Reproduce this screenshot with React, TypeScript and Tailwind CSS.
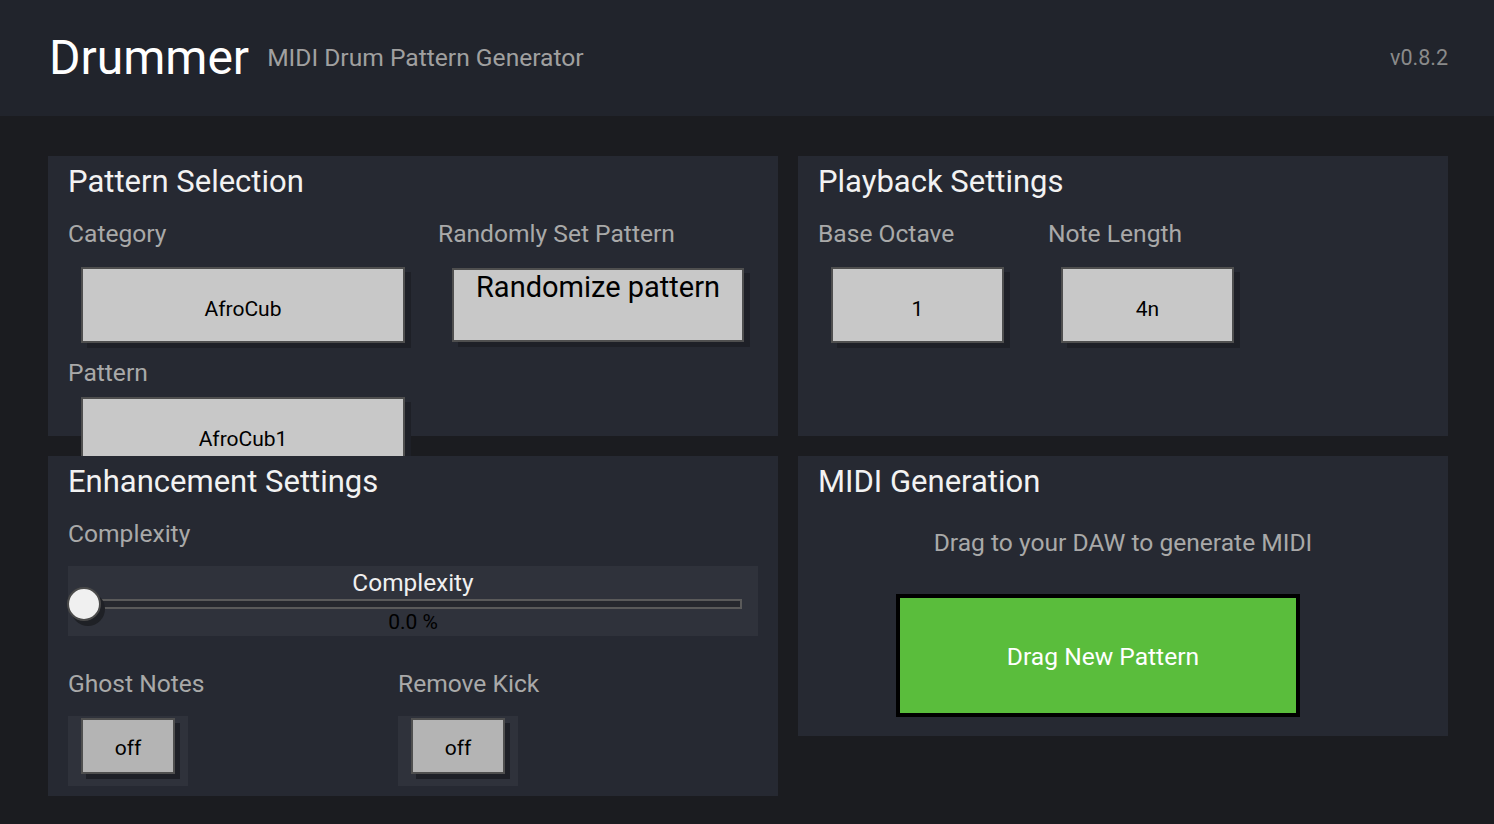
import React from 'react';

const font = { fontFamily: 'Roboto, "Noto Sans", sans-serif' };

function Panel({ title, className = '', children }: { title: string; className?: string; children?: React.ReactNode }) {
  return (
    <section className={`bg-[#262932] px-[20px] pt-[7px] ${className}`}>
      <h2 className="text-[31px] leading-[38px] text-[#f2f2f2] whitespace-nowrap">{title}</h2>
      {children}
    </section>
  );
}

function Label({ children }: { children: React.ReactNode }) {
  return <div className="text-[24.6px] leading-[28px] text-[#a9a9a9] whitespace-nowrap">{children}</div>;
}

function SelectButton({ value, className = '' }: { value: string; className?: string }) {
  return (
    <div
      className={`flex justify-center items-center pt-[8px] h-[76px] border-2 border-[#4f4f4f] bg-[#c8c8c8] text-[21px] leading-[24px] text-black shadow-[6px_5px_0_#1e2027] ${className}`}
    >
      {value}
    </div>
  );
}

function Toggle() {
  return (
    <div className="w-[120px] h-[70px] bg-[#2f323b] pl-[13px] pt-[2px]">
      <div className="flex justify-center items-center pt-[4px] w-[94px] h-[56px] border-2 border-[#4f4f4f] bg-[#b4b4b4] text-[21px] leading-[24px] text-black shadow-[5px_5px_0_#1e2027]">
        off
      </div>
    </div>
  );
}

export default function App() {
  return (
    <div className="min-h-[824px] bg-[#1b1c20]" style={font}>
      <header className="h-[116px] bg-[#21242c] flex items-center justify-between pl-[49px] pr-[46px]">
        <div className="flex items-center gap-[18px]">
          <h1 className="text-[48px] leading-[56px] text-white">Drummer</h1>
          <span className="text-[24.6px] leading-[28px] text-[#a0a0a0]">MIDI Drum Pattern Generator</span>
        </div>
        <span className="text-[21.5px] leading-[24px] text-[#8a8a8a]">v0.8.2</span>
      </header>

      <main className="flex gap-[20px] pt-[40px] pl-[48px] pr-[46px] pb-[28px]">
        <div className="flex flex-col gap-[20px] w-[730px] shrink-0">
          <Panel title="Pattern Selection" className="h-[280px]">
            <div className="grid grid-cols-[370px_1fr] mt-[19px]">
              <div>
                <Label>Category</Label>
                <SelectButton value="AfroCub" className="mt-[19px] ml-[13px] w-[324px]" />
                <div className="mt-[16px]">
                  <Label>Pattern</Label>
                </div>
                <SelectButton value="AfroCub1" className="mt-[10px] ml-[13px] w-[324px]" />
              </div>
              <div>
                <Label>Randomly Set Pattern</Label>
                <div className="mt-[20px] ml-[14px] w-[292px] h-[74px] border-2 border-[#4f4f4f] bg-[#c8c8c8] text-center pt-[1px] text-[29px] leading-[32px] text-black shadow-[6px_5px_0_#1e2027]">
                  Randomize pattern
                </div>
              </div>
            </div>
          </Panel>

          <Panel title="Enhancement Settings" className="relative h-[340px]">
            <div className="mt-[19px]">
              <Label>Complexity</Label>
            </div>
            <div className="mt-[18px] h-[70px] bg-[#2f323b] flex flex-col items-center pt-[4px]">
              <div className="text-[24.4px] leading-[26px] text-[#f0f0f0]">Complexity</div>
              <div className="relative self-stretch mt-[3px] h-[10px] ml-[16px] mr-[16px]">
                <div className="h-[10px] border-2 border-[#5a5a5a] bg-[#26282e]" />
                <div className="absolute left-[-17px] top-[-12px] w-[34px] h-[34px] rounded-full border-2 border-[#4a4a4a] bg-[#f0f0f0] shadow-[4px_5px_0_#1f2126]" />
              </div>
              <div className="mt-[2px] text-[21px] leading-[22px] text-black">0.0 %</div>
            </div>
            <div className="grid grid-cols-[330px_330px] mt-[34px]">
              <div>
                <Label>Ghost Notes</Label>
                <div className="mt-[18px]">
                  <Toggle />
                </div>
              </div>
              <div>
                <Label>Remove Kick</Label>
                <div className="mt-[18px]">
                  <Toggle />
                </div>
              </div>
            </div>
          </Panel>
        </div>

        <div className="flex flex-col gap-[20px] w-[650px] shrink-0">
          <Panel title="Playback Settings" className="h-[280px]">
            <div className="grid grid-cols-[230px_230px] mt-[19px]">
              <div>
                <Label>Base Octave</Label>
                <SelectButton value="1" className="mt-[19px] ml-[13px] w-[173px]" />
              </div>
              <div>
                <Label>Note Length</Label>
                <SelectButton value="4n" className="mt-[19px] ml-[13px] w-[173px]" />
              </div>
            </div>
          </Panel>

          <Panel title="MIDI Generation" className="relative h-[280px]">
            <p className="mt-[28px] text-center text-[24.6px] leading-[28px] text-[#a9a9a9]">
              Drag to your DAW to generate MIDI
            </p>
            <div className="mt-[37px] ml-[78px] w-[404px] h-[123px] border-4 border-black bg-[#5abd3c] flex items-center justify-center pt-[2px] pl-[10px] text-[24.6px] leading-[28px] text-white">
              Drag New Pattern
            </div>
          </Panel>
        </div>
      </main>
    </div>
  );
}
